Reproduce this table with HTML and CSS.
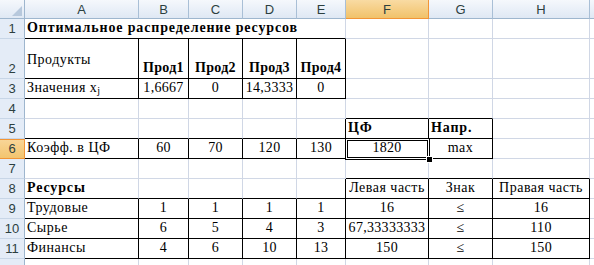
FILE: index.html
```html
<!DOCTYPE html>
<html lang="ru">
<head>
<meta charset="utf-8">
<title>Оптимальное распределение ресурсов</title>
<link rel="stylesheet" href="styles.css">
</head>
<body>
<div class="sheet">
  <!-- header row -->
  <div class="corner"><span class="tri"></span></div>
  <div class="ch">A</div>
  <div class="ch">B</div>
  <div class="ch">C</div>
  <div class="ch">D</div>
  <div class="ch">E</div>
  <div class="ch sel">F</div>
  <div class="ch">G</div>
  <div class="ch">H</div>
  <div class="ch"></div>

  <!-- row 1 -->
  <div class="rh">1</div>
  <div class="c span5 b bold">Оптимальное распределение ресурсов</div>
  <div class="c"></div><div class="c"></div><div class="c"></div><div class="c"></div>

  <!-- row 2 -->
  <div class="rh">2</div>
  <div class="c r b tall">Продукты</div>
  <div class="c r b ctr bold num">Прод1</div>
  <div class="c r b ctr bold num">Прод2</div>
  <div class="c r b ctr bold num">Прод3</div>
  <div class="c r b ctr bold num">Прод4</div>
  <div class="c"></div><div class="c"></div><div class="c"></div><div class="c"></div>

  <!-- row 3 -->
  <div class="rh">3</div>
  <div class="c r b">Значения x<sub>j</sub></div>
  <div class="c r b ctr num">1,6667</div>
  <div class="c r b ctr num">0</div>
  <div class="c r b ctr num">14,3333</div>
  <div class="c r b ctr num">0</div>
  <div class="c"></div><div class="c"></div><div class="c"></div><div class="c"></div>

  <!-- row 4 -->
  <div class="rh">4</div>
  <div class="c"></div><div class="c"></div><div class="c"></div><div class="c"></div><div class="c"></div>
  <div class="c b"></div><div class="c b"></div><div class="c"></div><div class="c"></div>

  <!-- row 5 -->
  <div class="rh">5</div>
  <div class="c b"></div><div class="c b"></div><div class="c b"></div><div class="c b"></div><div class="c b r"></div>
  <div class="c r b bold">ЦФ</div>
  <div class="c r b bold">Напр.</div>
  <div class="c"></div><div class="c"></div>

  <!-- row 6 -->
  <div class="rh sel">6</div>
  <div class="c r b">Коэфф. в ЦФ</div>
  <div class="c r b ctr num">60</div>
  <div class="c r b ctr num">70</div>
  <div class="c r b ctr num">120</div>
  <div class="c r b ctr num">130</div>
  <div class="c r b ctr num">1820</div>
  <div class="c r b ctr">max</div>
  <div class="c"></div><div class="c"></div>

  <!-- row 7 -->
  <div class="rh">7</div>
  <div class="c"></div><div class="c"></div><div class="c"></div><div class="c"></div><div class="c"></div>
  <div class="c b"></div><div class="c b"></div><div class="c b"></div><div class="c"></div>

  <!-- row 8 -->
  <div class="rh">8</div>
  <div class="c b bold">Ресурсы</div>
  <div class="c b"></div><div class="c b"></div><div class="c b"></div><div class="c b r"></div>
  <div class="c r b ctr">Левая часть</div>
  <div class="c r b ctr">Знак</div>
  <div class="c r b ctr">Правая часть</div>
  <div class="c"></div>

  <!-- row 9 -->
  <div class="rh">9</div>
  <div class="c r b">Трудовые</div>
  <div class="c r b ctr num">1</div>
  <div class="c r b ctr num">1</div>
  <div class="c r b ctr num">1</div>
  <div class="c r b ctr num">1</div>
  <div class="c r b ctr num">16</div>
  <div class="c r b ctr">≤</div>
  <div class="c r b ctr num">16</div>
  <div class="c"></div>

  <!-- row 10 -->
  <div class="rh">10</div>
  <div class="c r b">Сырье</div>
  <div class="c r b ctr num">6</div>
  <div class="c r b ctr num">5</div>
  <div class="c r b ctr num">4</div>
  <div class="c r b ctr num">3</div>
  <div class="c r b ctr num">67,33333333</div>
  <div class="c r b ctr">≤</div>
  <div class="c r b ctr num">110</div>
  <div class="c"></div>

  <!-- row 11 -->
  <div class="rh">11</div>
  <div class="c r b">Финансы</div>
  <div class="c r b ctr num">4</div>
  <div class="c r b ctr num">6</div>
  <div class="c r b ctr num">10</div>
  <div class="c r b ctr num">13</div>
  <div class="c r b ctr num">150</div>
  <div class="c r b ctr">≤</div>
  <div class="c r b ctr num">150</div>
  <div class="c"></div>

  <!-- row 12 (partially visible) -->
  <div class="rh"></div>
  <div class="c"></div><div class="c"></div><div class="c"></div><div class="c"></div><div class="c"></div>
  <div class="c"></div><div class="c"></div><div class="c"></div><div class="c"></div>

  <!-- active cell selection (F6) -->
  <div class="selection"><span class="handle"></span></div>
</div>
</body>
</html>
```

FILE: styles.css
```css
html, body {
  margin: 0;
  padding: 0;
  background: #fff;
  overflow: hidden;
}

.sheet {
  position: relative;
  display: grid;
  grid-template-columns: 25px 114px 50px 54px 54px 49px 83px 64px 97px 100px;
  grid-template-rows: 19px 20px 40px repeat(10, 20px);
  color: #000;
}

/* column headers */
.ch {
  display: flex;
  align-items: flex-end;
  justify-content: center;
  padding-bottom: 1px;
  box-sizing: border-box;
  background: linear-gradient(#f5f8fc, #dfe8f4);
  border-right: 1px solid #a9bfd6;
  border-bottom: 1px solid #9eb6ce;
  font-family: "Liberation Sans", Arial, sans-serif;
  font-size: 13px;
  line-height: 15px;
  color: #2c3f3f;
}
.ch.sel {
  background: linear-gradient(#f9dba3, #f1c26a);
  border-right-color: #f29536;
  border-bottom-color: #f29536;
}

.corner {
  position: relative;
  box-sizing: border-box;
  background: linear-gradient(#f5f8fc, #dfe8f4);
  border-right: 1px solid #9eb6ce;
  border-bottom: 1px solid #9eb6ce;
}
.corner .tri {
  position: absolute;
  right: 2px;
  bottom: 2px;
  width: 0;
  height: 0;
  border-left: 10px solid transparent;
  border-bottom: 10px solid #b7c8dc;
}

/* row headers */
.rh {
  display: flex;
  align-items: flex-end;
  justify-content: center;
  padding-bottom: 1px;
  box-sizing: border-box;
  background: #e4ecf7;
  border-right: 1px solid #9eb6ce;
  border-bottom: 1px solid #c8d6e7;
  font-family: "Liberation Sans", Arial, sans-serif;
  font-size: 13px;
  line-height: 16px;
  color: #2c3f3f;
}
.rh.sel {
  background: linear-gradient(#f9d699, #f3c56f);
  border-right-color: #f29536;
  border-bottom-color: #f29536;
  box-shadow: inset 0 1px 0 #f29536;
}

/* cells */
.c {
  display: flex;
  align-items: flex-end;
  box-sizing: border-box;
  padding: 0 2px 2px 2px;
  border-right: 1px solid #d0d7e5;
  border-bottom: 1px solid #d0d7e5;
  font-family: "Liberation Serif", "Times New Roman", serif;
  font-size: 14px;
  line-height: 16px;
  letter-spacing: 0.5px;
  white-space: nowrap;
}
.c.r { border-right-color: #000; }
.c.b { border-bottom-color: #000; }
.c.ctr { justify-content: center; }
.c.bold { font-weight: bold; letter-spacing: 0.85px; }
.c.num { letter-spacing: 0.3px; }
.c.span5 { grid-column: span 5; }
.c.tall { padding-bottom: 10px; }

.c sub {
  font-size: 10px;
  line-height: 1;
  vertical-align: -2px;
  letter-spacing: 0;
}

/* active cell */
.selection {
  position: absolute;
  left: 345px;
  top: 138px;
  width: 85px;
  height: 22px;
  box-sizing: border-box;
  border: 1px solid #000;
  box-shadow: inset 0 0 0 1px #fff, inset 0 0 0 2px #000;
  pointer-events: none;
}
.selection .handle {
  position: absolute;
  right: -3px;
  bottom: -3px;
  width: 5px;
  height: 5px;
  background: #000;
  outline: 1px solid #fff;
}
```
